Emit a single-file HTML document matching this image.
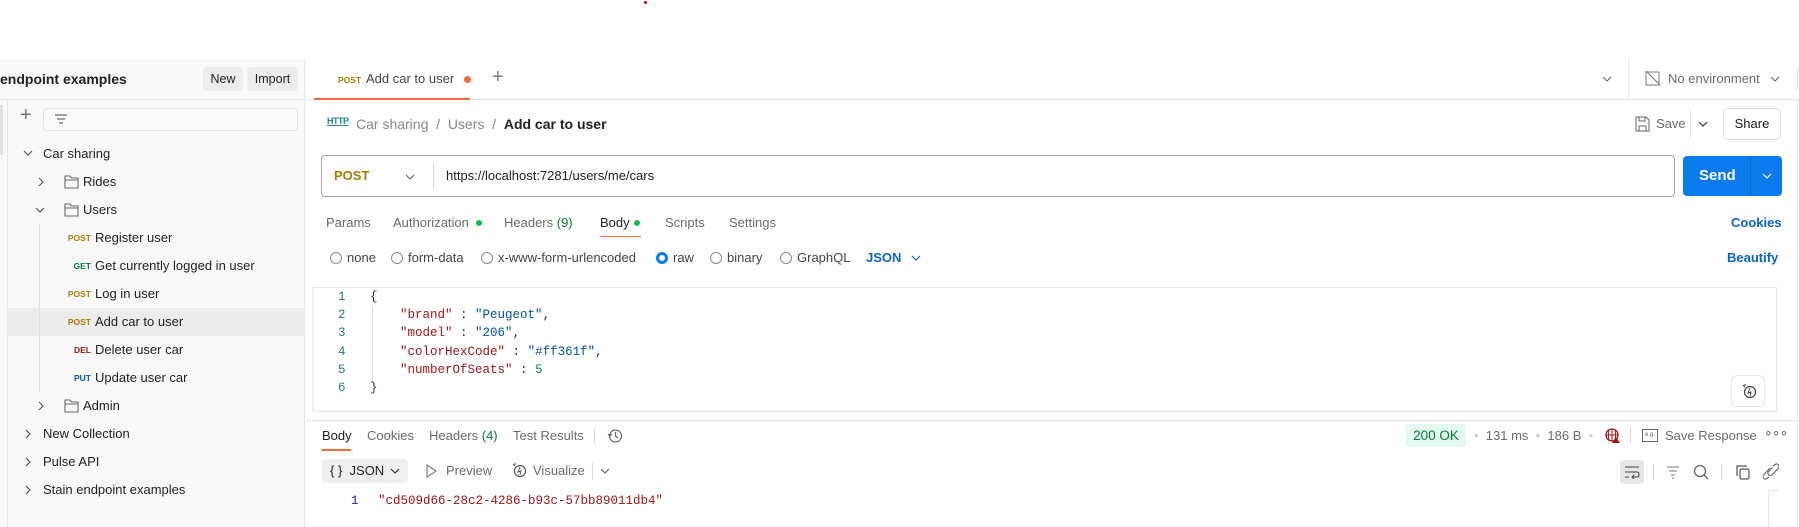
<!DOCTYPE html>
<html><head><meta charset="utf-8"><style>
*{box-sizing:border-box;margin:0;padding:0}
body{width:1799px;height:527px;overflow:hidden;background:#fff;font-family:"Liberation Sans",sans-serif;font-size:13px;color:#212121;position:relative}
.a{position:absolute;white-space:nowrap}
.g{color:#6b6b6b}
.m{font-family:"Liberation Mono",monospace;font-size:12.5px}
.post{color:#ad7a03;font-size:8.5px;font-weight:bold;width:40px;text-align:right;left:51px}
svg{position:absolute}
.cb{width:12px;height:12px;border:1px solid #8a8a8a;border-radius:50%;position:absolute}
</style></head><body>
<div class="a" style="left:644px;top:1px;width:3px;height:3px;background:#d00;border-radius:50%"></div>
<!-- sidebar -->
<div class="a" style="left:0;top:59px;width:305px;height:468px;background:#f9f9f9;border-right:1px solid #e6e6e6"></div>
<div class="a" style="left:0;top:99px;width:305px;height:1px;background:#e6e6e6"></div>
<div class="a" style="left:7px;top:100px;width:1px;height:427px;background:#e6e6e6"></div>
<div class="a" style="left:0;top:105px;width:3px;height:50px;background:#e0e0e0"></div>
<div class="a" style="left:0;top:70px;font-size:14px;font-weight:bold;line-height:18px">endpoint examples</div>
<div class="a" style="left:203px;top:67px;width:40px;height:24px;background:#ededed;border-radius:4px;text-align:center;line-height:24px;font-size:12.5px">New</div>
<div class="a" style="left:247px;top:67px;width:51px;height:24px;background:#ededed;border-radius:4px;text-align:center;line-height:24px;font-size:12.5px">Import</div>
<div class="a g" style="left:20px;top:104px;font-size:20px;color:#777">+</div>
<div class="a" style="left:43px;top:108px;width:255px;height:23px;border:1px solid #e6e6e6;border-radius:4px;background:#fbfbfb"></div>
<svg style="left:54px;top:113px" width="14" height="12"><path d="M1 2h12M3 6h8M5 10h4" stroke="#666" stroke-width="1.2"/></svg>
<div class="a" style="left:7px;top:308px;width:298px;height:28px;background:#ececec"></div>
<div class="a" style="left:39px;top:224px;width:1px;height:168px;background:#e0e0e0"></div>
<svg style="left:23px;top:149px" width="10" height="8"><path d="M1 2l4 4 4-4" stroke="#555" fill="none" stroke-width="1.2"/></svg>
<div class="a" style="left:43px;top:145px;line-height:18px">Car sharing</div>
<svg style="left:37px;top:177px" width="8" height="10"><path d="M2 1l4 4-4 4" stroke="#555" fill="none" stroke-width="1.2"/></svg>
<svg style="left:64px;top:175px" width="15" height="14"><path d="M1 1h5l1.5 2H14v10H1zM1 5h13" stroke="#666" fill="none" stroke-width="1.1"/></svg>
<div class="a" style="left:83px;top:173px;line-height:18px">Rides</div>
<svg style="left:35px;top:206px" width="10" height="8"><path d="M1 2l4 4 4-4" stroke="#555" fill="none" stroke-width="1.2"/></svg>
<svg style="left:64px;top:203px" width="15" height="14"><path d="M1 1h5l1.5 2H14v10H1zM1 5h13" stroke="#666" fill="none" stroke-width="1.1"/></svg>
<div class="a" style="left:83px;top:201px;line-height:18px">Users</div>
<div class="a post" style="top:233px">POST</div><div class="a" style="left:95px;top:229px;line-height:18px">Register user</div>
<div class="a post" style="top:233px;top:261px;color:#007f31">GET</div><div class="a" style="left:95px;top:257px;line-height:18px">Get currently logged in user</div>
<div class="a post" style="top:289px">POST</div><div class="a" style="left:95px;top:285px;line-height:18px">Log in user</div>
<div class="a post" style="top:317px">POST</div><div class="a" style="left:95px;top:313px;line-height:18px">Add car to user</div>
<div class="a post" style="top:345px;color:#8e1a10">DEL</div><div class="a" style="left:95px;top:341px;line-height:18px">Delete user car</div>
<div class="a post" style="top:373px;color:#0053b8">PUT</div><div class="a" style="left:95px;top:369px;line-height:18px">Update user car</div>
<svg style="left:37px;top:401px" width="8" height="10"><path d="M2 1l4 4-4 4" stroke="#555" fill="none" stroke-width="1.2"/></svg>
<svg style="left:64px;top:399px" width="15" height="14"><path d="M1 1h5l1.5 2H14v10H1zM1 5h13" stroke="#666" fill="none" stroke-width="1.1"/></svg>
<div class="a" style="left:83px;top:397px;line-height:18px">Admin</div>
<svg style="left:24px;top:429px" width="8" height="10"><path d="M2 1l4 4-4 4" stroke="#555" fill="none" stroke-width="1.2"/></svg>
<div class="a" style="left:43px;top:425px;line-height:18px">New Collection</div>
<svg style="left:24px;top:457px" width="8" height="10"><path d="M2 1l4 4-4 4" stroke="#555" fill="none" stroke-width="1.2"/></svg>
<div class="a" style="left:43px;top:453px;line-height:18px">Pulse API</div>
<svg style="left:24px;top:485px" width="8" height="10"><path d="M2 1l4 4-4 4" stroke="#555" fill="none" stroke-width="1.2"/></svg>
<div class="a" style="left:43px;top:481px;line-height:18px">Stain endpoint examples</div>
<!-- main top bar -->
<div class="a" style="left:306px;top:99px;width:1493px;height:1px;background:#e6e6e6"></div>
<div class="a" style="left:314px;top:98px;width:156px;height:2px;background:#f26b3a"></div>
<div class="a" style="left:338px;top:75px;color:#ad7a03;font-size:8.5px;font-weight:bold">POST</div><div class="a" style="left:366px;top:70px;line-height:18px;color:#444">Add car to user</div>
<div class="a" style="left:464px;top:76px;width:7px;height:7px;border-radius:50%;background:#f26b3a"></div>
<div class="a" style="left:492px;top:66px;font-size:20px;color:#777">+</div>
<svg style="left:1602px;top:75px" width="10" height="8"><path d="M1 2l4 4 4-4" stroke="#666" fill="none" stroke-width="1.1"/></svg>
<div class="a" style="left:1628px;top:59px;width:1px;height:40px;background:#e6e6e6"></div>
<svg style="left:1645px;top:70px" width="16" height="16"><rect x="1" y="2" width="13" height="13" stroke="#777" fill="none"/><path d="M1 1l14 14" stroke="#777"/></svg>
<div class="a g" style="left:1668px;top:70px;line-height:18px;font-size:13px">No environment</div>
<svg style="left:1770px;top:75px" width="10" height="8"><path d="M1 2l4 4 4-4" stroke="#666" fill="none" stroke-width="1.1"/></svg>
<div class="a" style="left:1797px;top:68px;width:1px;height:22px;background:#ddd"></div>
<div class="a" style="left:1797px;top:100px;width:1px;height:427px;background:#e6e6e6"></div>
<!-- breadcrumb -->
<div class="a" style="left:327px;top:116px;font-size:9px;font-weight:bold;color:#2c7d9a;text-decoration:underline;letter-spacing:-.5px">HTTP</div>
<div class="a" style="left:356px;top:115px;line-height:18px;font-size:14px;color:#888">Car sharing&nbsp; / &nbsp;Users&nbsp; / &nbsp;<span style="color:#212121;font-weight:bold">Add car to user</span></div>
<svg style="left:1635px;top:116px" width="15" height="16"><path d="M1 1h10l3 3v11H1zM4 1v4h6V1M4 15v-5h7v5" stroke="#666" fill="none"/></svg>
<div class="a g" style="left:1656px;top:115px;line-height:18px">Save</div>
<div class="a" style="left:1690px;top:108px;width:1px;height:32px;background:#e6e6e6"></div>
<svg style="left:1698px;top:120px" width="10" height="8"><path d="M1 2l4 4 4-4" stroke="#333" fill="none" stroke-width="1.2"/></svg>
<div class="a" style="left:1723px;top:108px;width:58px;height:32px;border:1px solid #ddd;border-radius:4px;text-align:center;line-height:30px">Share</div>
<!-- url -->
<div class="a" style="left:321px;top:155px;width:1354px;height:42px;border:1px solid #a8a8a8;border-radius:4px"></div>
<div class="a" style="left:334px;top:168px;font-weight:bold;color:#ad7a03;font-size:13px">POST</div>
<svg style="left:405px;top:173px" width="10" height="8"><path d="M1 2l4 4 4-4" stroke="#666" fill="none" stroke-width="1.1"/></svg>
<div class="a" style="left:433px;top:163px;width:1px;height:26px;background:#ddd"></div>
<div class="a" style="left:446px;top:167px;line-height:18px">https://localhost:7281/users/me/cars</div>
<div class="a" style="left:1683px;top:156px;width:99px;height:40px;background:#097bed;border-radius:4px"></div>
<div class="a" style="left:1750px;top:156px;width:1px;height:40px;background:#0a68c8"></div>
<div class="a" style="left:1699px;top:166px;color:#fff;font-weight:bold;font-size:15px;line-height:20px">Send</div>
<svg style="left:1762px;top:172px" width="10" height="8"><path d="M1 2l4 4 4-4" stroke="#fff" fill="none" stroke-width="1.2"/></svg>
<!-- tabs -->
<div class="a g" style="left:326px;top:214px;line-height:18px">Params</div>
<div class="a g" style="left:393px;top:214px;line-height:18px">Authorization</div>
<div class="a" style="left:476px;top:220px;width:6px;height:6px;border-radius:50%;background:#0cbb52"></div>
<div class="a g" style="left:504px;top:214px;line-height:18px">Headers <span style="color:#007f31">(9)</span></div>
<div class="a" style="left:600px;top:214px;line-height:18px">Body</div>
<div class="a" style="left:634px;top:220px;width:6px;height:6px;border-radius:50%;background:#0cbb52"></div>
<div class="a" style="left:600px;top:236px;width:41px;height:1px;background:#f26b3a"></div>
<div class="a g" style="left:665px;top:214px;line-height:18px">Scripts</div>
<div class="a g" style="left:729px;top:214px;line-height:18px">Settings</div>
<div class="a" style="left:1731px;top:214px;line-height:18px;color:#0a65c9;font-weight:bold;font-size:13px">Cookies</div>
<!-- radios -->
<div class="cb" style="left:330px;top:252px"></div><div class="a" style="left:347px;top:250px;line-height:16px;color:#444">none</div>
<div class="cb" style="left:391px;top:252px"></div><div class="a" style="left:408px;top:250px;line-height:16px;color:#444">form-data</div>
<div class="cb" style="left:481px;top:252px"></div><div class="a" style="left:498px;top:250px;line-height:16px;color:#444">x-www-form-urlencoded</div>
<div class="cb" style="left:656px;top:252px;border:3px solid #097bed"></div><div class="a" style="left:673px;top:250px;line-height:16px;color:#444">raw</div>
<div class="cb" style="left:710px;top:252px"></div><div class="a" style="left:727px;top:250px;line-height:16px;color:#444">binary</div>
<div class="cb" style="left:780px;top:252px"></div><div class="a" style="left:797px;top:250px;line-height:16px;color:#444">GraphQL</div>
<div class="a" style="left:866px;top:250px;line-height:16px;color:#0a65c9;font-weight:bold;font-size:13px">JSON</div>
<svg style="left:911px;top:254px" width="10" height="8"><path d="M1 2l4 4 4-4" stroke="#0a65c9" fill="none" stroke-width="1.2"/></svg>
<div class="a" style="left:1727px;top:250px;line-height:16px;color:#0a65c9;font-weight:bold;font-size:13px">Beautify</div>
<!-- editor -->
<div class="a" style="left:314px;top:287px;width:1463px;height:125px;border-top:1px solid #e6e6e6;border-bottom:1px solid #e6e6e6;border-right:1px solid #e6e6e6;box-shadow:-2px 0 0 #f2f2f2"></div>
<div class="a" style="left:372px;top:306px;width:1px;height:76px;background:#ddd"></div>
<div class="a m" style="left:338px;top:288px;line-height:18.2px;color:#237893;text-align:right">1<br>2<br>3<br>4<br>5<br>6</div>
<div class="a m" style="left:370px;top:288px;line-height:18.2px;color:#333">{<br>&nbsp;&nbsp;&nbsp;&nbsp;<span style="color:#a31515">"brand"</span> : <span style="color:#0451a5">"Peugeot"</span>,<br>&nbsp;&nbsp;&nbsp;&nbsp;<span style="color:#a31515">"model"</span> : <span style="color:#0451a5">"206"</span>,<br>&nbsp;&nbsp;&nbsp;&nbsp;<span style="color:#a31515">"colorHexCode"</span> : <span style="color:#0451a5">"#ff361f"</span>,<br>&nbsp;&nbsp;&nbsp;&nbsp;<span style="color:#a31515">"numberOfSeats"</span> : <span style="color:#098658">5</span><br>}</div>
<div class="a" style="left:1731px;top:375px;width:34px;height:32px;border:1px solid #e6e6e6;border-radius:6px"></div>
<svg style="left:1741px;top:383px" width="16" height="16"><circle cx="9" cy="9" r="5.5" stroke="#444" fill="none" stroke-width="1.2"/><path d="M9 5l-2 5 3-1-1 4M2 2l2 2M4 1v2" stroke="#444" fill="none" stroke-width="1"/></svg>
<div class="a" style="left:306px;top:420px;width:1491px;height:1px;background:#e6e6e6"></div>
<!-- response -->
<div class="a" style="left:322px;top:427px;line-height:18px">Body</div>
<div class="a" style="left:322px;top:449px;width:29px;height:2px;background:#f26b3a"></div>
<div class="a g" style="left:367px;top:427px;line-height:18px">Cookies</div>
<div class="a g" style="left:429px;top:427px;line-height:18px">Headers <span style="color:#007f31">(4)</span></div>
<div class="a g" style="left:513px;top:427px;line-height:18px">Test Results</div>
<div class="a" style="left:594px;top:428px;width:1px;height:16px;background:#ddd"></div>
<svg style="left:607px;top:428px" width="16" height="16"><circle cx="8.5" cy="8" r="6" stroke="#666" fill="none" stroke-width="1.2"/><path d="M8.5 4v4l2.5 2M1 6l2 2 2-2" stroke="#666" fill="none" stroke-width="1.2"/></svg>
<div class="a" style="left:1406px;top:424px;width:60px;height:23px;background:#e4faf0;border-radius:3px;color:#007f31;text-align:center;line-height:23px;font-size:13.5px">200 OK</div>
<div class="a g" style="left:1474px;top:427px;line-height:18px"><span style="color:#ccc">•</span>&nbsp; 131 ms &nbsp;<span style="color:#ccc">•</span>&nbsp; 186 B &nbsp;<span style="color:#ccc">•</span></div>
<svg style="left:1605px;top:428px" width="16" height="16"><circle cx="7" cy="7" r="6" stroke="#a31515" fill="none" stroke-width="1.3"/><path d="M1 7h12M7 1v12M4 2q-1 5 0 10M10 2q1 5 0 10" stroke="#a31515" fill="none"/><path d="M11 9l4 6h-8z" fill="#a31515"/></svg>
<div class="a" style="left:1630px;top:427px;width:1px;height:17px;background:#ddd"></div>
<div class="a" style="left:1642px;top:429px;width:16px;height:13px;border:1.2px solid #666;font-size:6px;line-height:11px;text-align:center;color:#666">e.g.</div>
<div class="a g" style="left:1665px;top:427px;line-height:18px">Save Response</div>
<div class="a g" style="left:1764px;top:424px;font-size:14px;letter-spacing:-1px">∘∘∘</div>
<div class="a" style="left:322px;top:459px;width:86px;height:24px;background:#efefef;border-radius:4px"></div>
<div class="a" style="left:330px;top:463px;line-height:16px">{ }&nbsp; JSON</div>
<svg style="left:390px;top:467px" width="10" height="8"><path d="M1 2l4 4 4-4" stroke="#333" fill="none" stroke-width="1.2"/></svg>
<svg style="left:425px;top:464px" width="12" height="14"><path d="M2 1l9 6-9 6z" stroke="#666" fill="none"/></svg>
<div class="a g" style="left:446px;top:463px;line-height:16px">Preview</div>
<svg style="left:511px;top:462px" width="16" height="16"><circle cx="9" cy="9" r="5.5" stroke="#555" fill="none" stroke-width="1.2"/><path d="M9 5l-2 5 3-1-1 4M2 2l2 2M4 1v2" stroke="#555" fill="none"/></svg>
<div class="a g" style="left:533px;top:463px;line-height:16px">Visualize</div>
<div class="a" style="left:592px;top:462px;width:1px;height:18px;background:#ddd"></div>
<svg style="left:600px;top:467px" width="10" height="8"><path d="M1 2l4 4 4-4" stroke="#666" fill="none" stroke-width="1.2"/></svg>
<div class="a" style="left:1620px;top:460px;width:24px;height:24px;background:#e6e6e6;border-radius:4px"></div>
<svg style="left:1624px;top:465px" width="16" height="14"><path d="M1 2h14M1 7h12q2 0 2 2.5T13 12H9M10 10l-2 2 2 2M1 12h4" stroke="#444" fill="none" stroke-width="1.1"/></svg>
<div class="a" style="left:1653px;top:464px;width:1px;height:16px;background:#ddd"></div>
<svg style="left:1666px;top:465px" width="14" height="14"><path d="M1 2h12M3 6h8M5 10h4M6 13h2" stroke="#777" stroke-width="1.1"/></svg>
<svg style="left:1693px;top:464px" width="16" height="16"><circle cx="7" cy="7" r="5.5" stroke="#666" fill="none" stroke-width="1.3"/><path d="M11 11l4 4" stroke="#666" stroke-width="1.3"/></svg>
<div class="a" style="left:1721px;top:464px;width:1px;height:16px;background:#ddd"></div>
<svg style="left:1735px;top:464px" width="16" height="16"><rect x="5" y="5" width="9" height="10" rx="1.5" stroke="#555" fill="none" stroke-width="1.2"/><path d="M3 11H2V2h9v1" stroke="#555" fill="none" stroke-width="1.2"/></svg>
<svg style="left:1763px;top:463px" width="16" height="17"><path d="M10 3l2-1.5a2.5 2.5 0 013.5 3.5L9 12a2.5 2.5 0 01-3.5-3.5l4-4M6 14l-2 1.5A2.5 2.5 0 01.5 12L7 5" stroke="#666" fill="none" stroke-width="1.1"/></svg>
<div class="a" style="left:1768px;top:490px;width:11px;height:1px;background:#e6e6e6"></div>
<div class="a" style="left:1768px;top:490px;width:1px;height:37px;background:#e6e6e6"></div>
<div class="a m" style="left:351px;top:493px;line-height:16px;color:#1a1aa6">1</div>
<div class="a m" style="left:378px;top:493px;line-height:16px;color:#a31515">"cd509d66-28c2-4286-b93c-57bb89011db4"</div>
</body></html>
